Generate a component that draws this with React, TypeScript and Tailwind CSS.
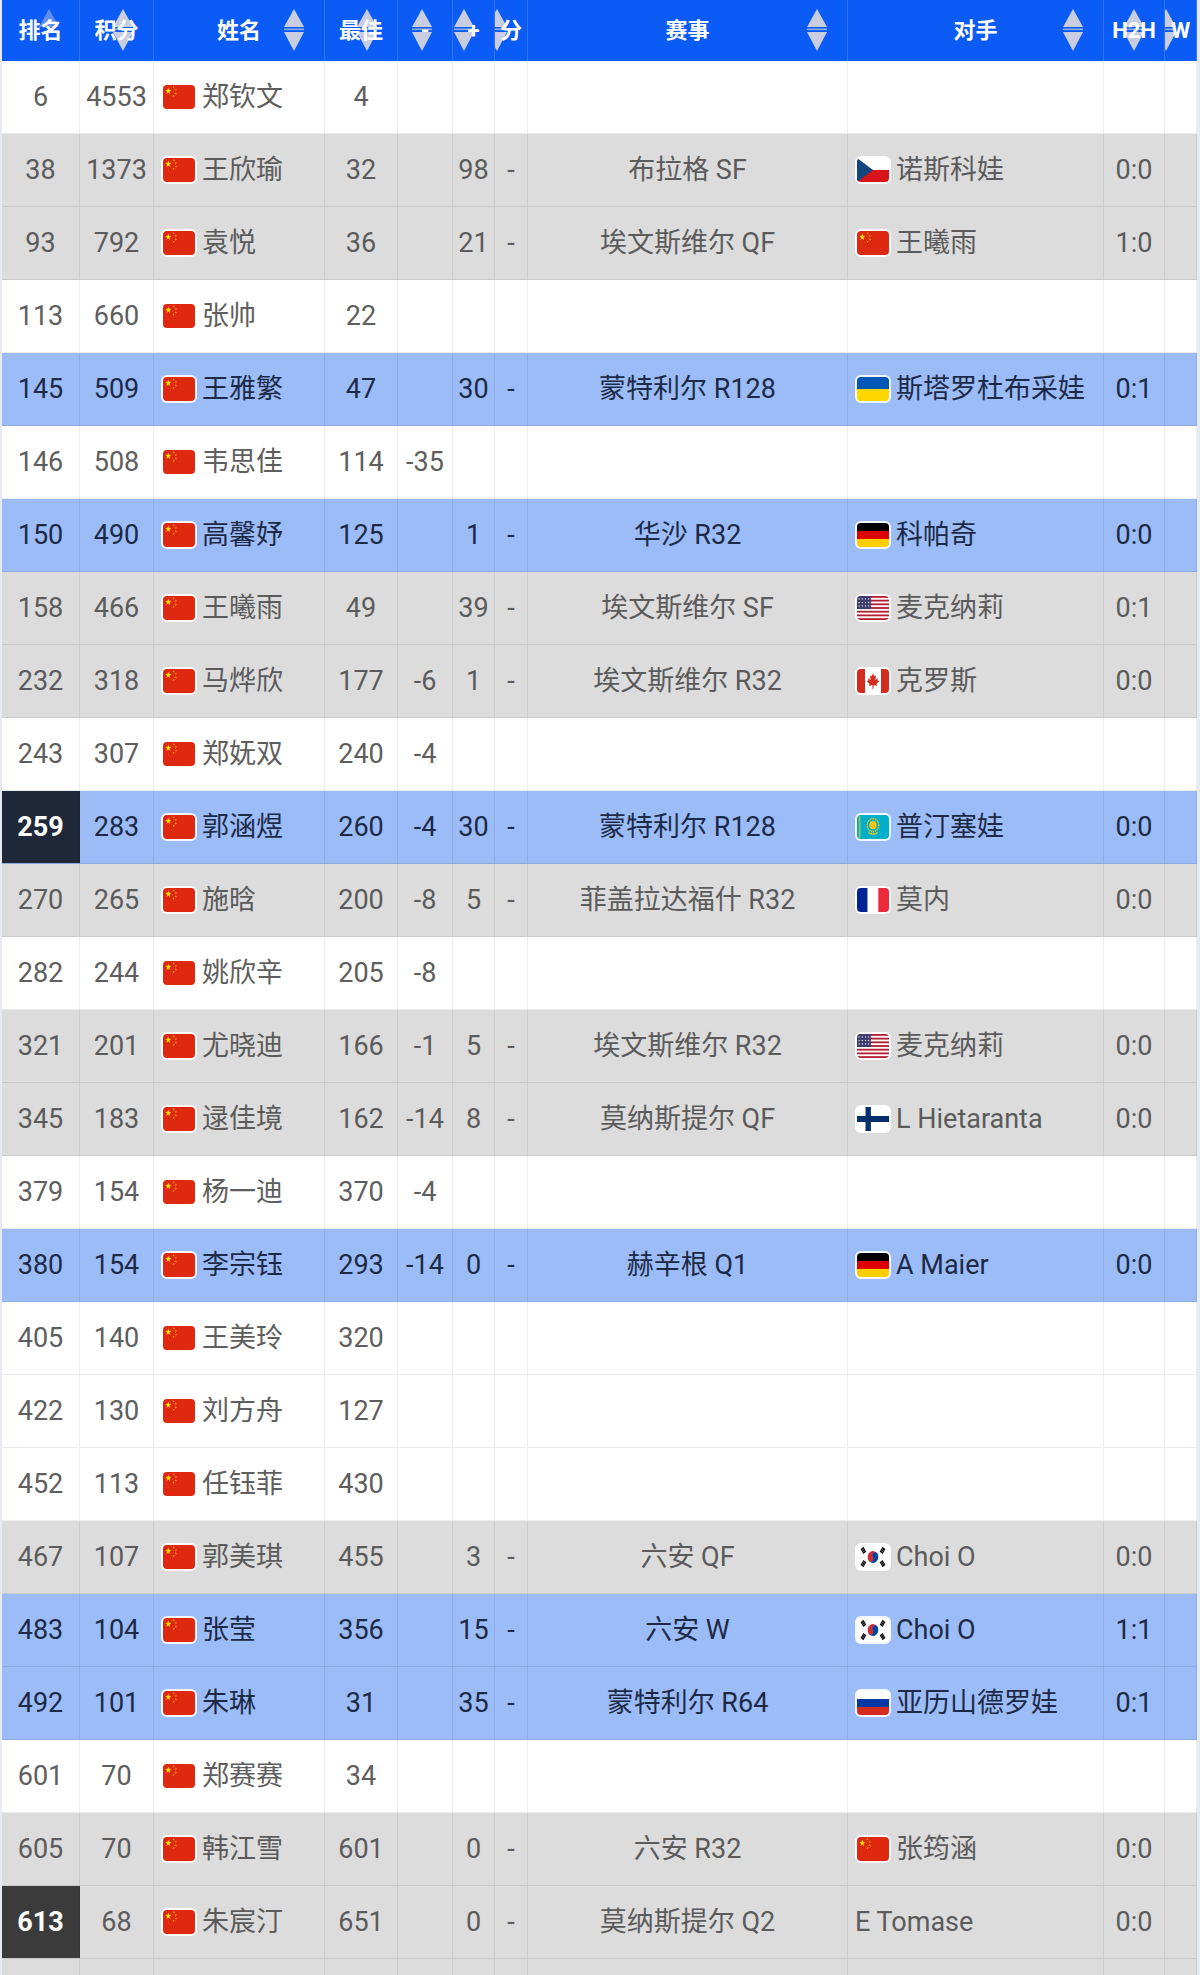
import React from 'react'

type FlagCode = 'cn' | 'cz' | 'ua' | 'de' | 'us' | 'ca' | 'kz' | 'fr' | 'fi' | 'kr' | 'ru'
type Tone = 'white' | 'gray' | 'blue'

interface Player {
  rank: string
  points: string
  name: string
  best: string
  drop?: string
  gain?: string
  event?: string
  opponent?: string
  oppFlag?: FlagCode
  h2h?: string
  tone: Tone
  mark?: 'navy' | 'dark'
}

const players: Player[] = [
  { rank: '6', points: '4553', name: '郑钦文', best: '4', tone: 'white' },
  { rank: '38', points: '1373', name: '王欣瑜', best: '32', gain: '98', event: '布拉格 SF', opponent: '诺斯科娃', oppFlag: 'cz', h2h: '0:0', tone: 'gray' },
  { rank: '93', points: '792', name: '袁悦', best: '36', gain: '21', event: '埃文斯维尔 QF', opponent: '王曦雨', oppFlag: 'cn', h2h: '1:0', tone: 'gray' },
  { rank: '113', points: '660', name: '张帅', best: '22', tone: 'white' },
  { rank: '145', points: '509', name: '王雅繁', best: '47', gain: '30', event: '蒙特利尔 R128', opponent: '斯塔罗杜布采娃', oppFlag: 'ua', h2h: '0:1', tone: 'blue' },
  { rank: '146', points: '508', name: '韦思佳', best: '114', drop: '-35', tone: 'white' },
  { rank: '150', points: '490', name: '高馨妤', best: '125', gain: '1', event: '华沙 R32', opponent: '科帕奇', oppFlag: 'de', h2h: '0:0', tone: 'blue' },
  { rank: '158', points: '466', name: '王曦雨', best: '49', gain: '39', event: '埃文斯维尔 SF', opponent: '麦克纳莉', oppFlag: 'us', h2h: '0:1', tone: 'gray' },
  { rank: '232', points: '318', name: '马烨欣', best: '177', drop: '-6', gain: '1', event: '埃文斯维尔 R32', opponent: '克罗斯', oppFlag: 'ca', h2h: '0:0', tone: 'gray' },
  { rank: '243', points: '307', name: '郑妩双', best: '240', drop: '-4', tone: 'white' },
  { rank: '259', points: '283', name: '郭涵煜', best: '260', drop: '-4', gain: '30', event: '蒙特利尔 R128', opponent: '普汀塞娃', oppFlag: 'kz', h2h: '0:0', tone: 'blue', mark: 'navy' },
  { rank: '270', points: '265', name: '施晗', best: '200', drop: '-8', gain: '5', event: '菲盖拉达福什 R32', opponent: '莫内', oppFlag: 'fr', h2h: '0:0', tone: 'gray' },
  { rank: '282', points: '244', name: '姚欣辛', best: '205', drop: '-8', tone: 'white' },
  { rank: '321', points: '201', name: '尤晓迪', best: '166', drop: '-1', gain: '5', event: '埃文斯维尔 R32', opponent: '麦克纳莉', oppFlag: 'us', h2h: '0:0', tone: 'gray' },
  { rank: '345', points: '183', name: '逯佳境', best: '162', drop: '-14', gain: '8', event: '莫纳斯提尔 QF', opponent: 'L Hietaranta', oppFlag: 'fi', h2h: '0:0', tone: 'gray' },
  { rank: '379', points: '154', name: '杨一迪', best: '370', drop: '-4', tone: 'white' },
  { rank: '380', points: '154', name: '李宗钰', best: '293', drop: '-14', gain: '0', event: '赫辛根 Q1', opponent: 'A Maier', oppFlag: 'de', h2h: '0:0', tone: 'blue' },
  { rank: '405', points: '140', name: '王美玲', best: '320', tone: 'white' },
  { rank: '422', points: '130', name: '刘方舟', best: '127', tone: 'white' },
  { rank: '452', points: '113', name: '任钰菲', best: '430', tone: 'white' },
  { rank: '467', points: '107', name: '郭美琪', best: '455', gain: '3', event: '六安 QF', opponent: 'Choi O', oppFlag: 'kr', h2h: '0:0', tone: 'gray' },
  { rank: '483', points: '104', name: '张莹', best: '356', gain: '15', event: '六安 W', opponent: 'Choi O', oppFlag: 'kr', h2h: '1:1', tone: 'blue' },
  { rank: '492', points: '101', name: '朱琳', best: '31', gain: '35', event: '蒙特利尔 R64', opponent: '亚历山德罗娃', oppFlag: 'ru', h2h: '0:1', tone: 'blue' },
  { rank: '601', points: '70', name: '郑赛赛', best: '34', tone: 'white' },
  { rank: '605', points: '70', name: '韩江雪', best: '601', gain: '0', event: '六安 R32', opponent: '张筠涵', oppFlag: 'cn', h2h: '0:0', tone: 'gray' },
  { rank: '613', points: '68', name: '朱宸汀', best: '651', gain: '0', event: '莫纳斯提尔 Q2', opponent: 'E Tomase', h2h: '0:0', tone: 'gray', mark: 'dark' },
]

const headers = ['排名', '积分', '姓名', '最佳', '-', '+', '分', '赛事', '对手', 'H2H', 'W']

const cols = 'grid grid-cols-[78px_74px_171px_73px_55px_42px_33px_320px_256px_61px_32px]'

function star(cx: number, cy: number, r: number, rot = 0) {
  const pts: string[] = []
  for (let i = 0; i < 10; i++) {
    const rad = i % 2 === 0 ? r : r * 0.4
    const a = (Math.PI / 5) * i - Math.PI / 2 + rot
    pts.push(`${(cx + rad * Math.cos(a)).toFixed(2)},${(cy + rad * Math.sin(a)).toFixed(2)}`)
  }
  return pts.join(' ')
}

function FlagArt({ code }: { code: FlagCode }) {
  switch (code) {
    case 'cn':
      return (
        <>
          <rect width="30" height="20" fill="#de2910" />
          <polygon points={star(5, 5, 3)} fill="#ffde00" />
          <polygon points={star(10, 2, 1, 0.4)} fill="#ffde00" />
          <polygon points={star(12, 4, 1, 0.2)} fill="#ffde00" />
          <polygon points={star(12, 7, 1)} fill="#ffde00" />
          <polygon points={star(10, 9, 1, 0.3)} fill="#ffde00" />
        </>
      )
    case 'cz':
      return (
        <>
          <rect width="30" height="10" fill="#ffffff" />
          <rect y="10" width="30" height="10" fill="#d7141a" />
          <polygon points="0,0 15,10 0,20" fill="#11457e" />
        </>
      )
    case 'ua':
      return (
        <>
          <rect width="30" height="10" fill="#0057b7" />
          <rect y="10" width="30" height="10" fill="#ffd700" />
        </>
      )
    case 'de':
      return (
        <>
          <rect width="30" height="7" fill="#000000" />
          <rect y="6.7" width="30" height="6.7" fill="#dd0000" />
          <rect y="13.3" width="30" height="6.7" fill="#ffce00" />
        </>
      )
    case 'us':
      return (
        <>
          <rect width="30" height="20" fill="#ffffff" />
          {[0, 2, 4, 6, 8, 10, 12].map((i) => (
            <rect key={i} y={(i * 20) / 13} width="30" height={20 / 13} fill="#b22234" />
          ))}
          <rect width="13" height="10.8" fill="#3c3b6e" />
          {[2, 5, 8, 11].map((x) =>
            [2, 5, 8].map((y) => <circle key={`${x}-${y}`} cx={x} cy={y + 0.4} r="0.6" fill="#ffffff" />)
          )}
        </>
      )
    case 'ca':
      return (
        <>
          <rect width="30" height="20" fill="#ffffff" />
          <rect width="7.5" height="20" fill="#d52b1e" />
          <rect x="22.5" width="7.5" height="20" fill="#d52b1e" />
          <polygon
            points="15,3.5 16.2,6 17.8,5.4 17.2,9.2 19.6,7.6 19.2,9.6 21,10 18.3,12.4 18.8,14 15.5,13.5 15.5,16.5 14.5,16.5 14.5,13.5 11.2,14 11.7,12.4 9,10 10.8,9.6 10.4,7.6 12.8,9.2 12.2,5.4 13.8,6"
            fill="#d52b1e"
          />
        </>
      )
    case 'kz':
      return (
        <>
          <rect width="30" height="20" fill="#00afca" />
          <circle cx="15" cy="8.5" r="5.4" fill="none" stroke="#fec50c" strokeWidth="1.4" strokeDasharray="1 0.8" />
          <circle cx="15" cy="8.5" r="3.4" fill="#fec50c" />
          <path d="M10 14 Q15 17 20 14 L19 15.5 Q15 17.5 11 15.5 Z" fill="#fec50c" />
          <rect x="2" y="1" width="1.2" height="18" fill="#fec50c" opacity="0.8" />
        </>
      )
    case 'fr':
      return (
        <>
          <rect width="10" height="20" fill="#002395" />
          <rect x="10" width="10" height="20" fill="#ffffff" />
          <rect x="20" width="10" height="20" fill="#ed2939" />
        </>
      )
    case 'fi':
      return (
        <>
          <rect width="30" height="20" fill="#ffffff" />
          <rect y="7.5" width="30" height="5" fill="#002f6c" />
          <rect x="8" width="5" height="20" fill="#002f6c" />
        </>
      )
    case 'kr':
      return (
        <>
          <rect width="30" height="20" fill="#ffffff" />
          <g transform="rotate(-33 15 10)">
            <path d="M10 10 A5 5 0 0 1 20 10 Z" fill="#cd2e3a" />
            <path d="M10 10 A5 5 0 0 0 20 10 Z" fill="#0047a0" />
            <circle cx="12.5" cy="10" r="2.5" fill="#cd2e3a" />
            <circle cx="17.5" cy="10" r="2.5" fill="#0047a0" />
          </g>
          {[
            [6, 4.5, -33],
            [24, 4.5, 33],
            [6, 15.5, 33],
            [24, 15.5, -33],
          ].map(([x, y, r]) => (
            <g key={`${x}-${y}`} transform={`translate(${x} ${y}) rotate(${r})`}>
              <rect x="-1.6" y="-2.5" width="1" height="5" fill="#000000" />
              <rect x="-0.5" y="-2.5" width="1" height="5" fill="#000000" />
              <rect x="0.6" y="-2.5" width="1" height="5" fill="#000000" />
            </g>
          ))}
        </>
      )
    case 'ru':
      return (
        <>
          <rect width="30" height="7" fill="#ffffff" />
          <rect y="6.7" width="30" height="6.7" fill="#0039a6" />
          <rect y="13.3" width="30" height="6.7" fill="#d52b1e" />
        </>
      )
  }
}

function Flag({ code }: { code: FlagCode }) {
  return (
    <span className="flex h-[28px] w-[36px] shrink-0 items-center justify-center rounded-[6px] bg-white/90 p-[2px]">
      <svg viewBox="0 0 30 20" preserveAspectRatio="none" className="h-full w-full rounded-[4px]">
        <FlagArt code={code} />
      </svg>
    </span>
  )
}

function SortArrows({ upOnly }: { upOnly?: boolean }) {
  return (
    <svg viewBox="0 0 22 44" className="absolute right-[19px] top-[8px] h-[44px] w-[22px] blur-[0.6px]">
      <polygon points="11,1 21,19 1,19" fill="#c9cde0" opacity={upOnly ? 0.45 : 1} />
      {!upOnly && (
        <>
          <rect x="1" y="20.5" width="20" height="1.6" fill="#c9cde0" opacity="0.7" />
          <polygon points="1,24 21,24 11,43" fill="#c9cde0" />
        </>
      )}
    </svg>
  )
}

const toneBg: Record<Tone, string> = {
  white: 'bg-white text-[#5e5e5e]',
  gray: 'bg-[#dcdcdc] text-[#5b5b5b]',
  blue: 'bg-[#9bbcf7] text-[#1c2a48]',
}

function Cell({ children, className = '' }: { children?: React.ReactNode; className?: string }) {
  return (
    <div className={`flex items-center justify-center border-r border-black/[0.07] ${className}`}>{children}</div>
  )
}

function PlayerRow({ p }: { p: Player }) {
  const markClass =
    p.mark === 'navy' ? 'bg-[#1f2839] font-bold text-white' : p.mark === 'dark' ? 'bg-[#3b3b3b] font-bold text-white' : ''
  return (
    <div className={`${cols} h-[73px] border-b border-black/[0.08] ${toneBg[p.tone]}`}>
      <Cell className={markClass}>{p.rank}</Cell>
      <Cell>{p.points}</Cell>
      <Cell className="justify-start gap-[5px] pl-[7px]">
        <Flag code="cn" />
        <span>{p.name}</span>
      </Cell>
      <Cell>{p.best}</Cell>
      <Cell>{p.drop}</Cell>
      <Cell>{p.gain}</Cell>
      <Cell>{p.event ? '-' : ''}</Cell>
      <Cell>{p.event}</Cell>
      <Cell className="justify-start gap-[5px] pl-[7px]">
        {p.oppFlag && <Flag code={p.oppFlag} />}
        {p.opponent && <span className="whitespace-nowrap">{p.opponent}</span>}
      </Cell>
      <Cell>{p.h2h}</Cell>
      <Cell />
    </div>
  )
}

export default function App() {
  return (
    <div className="h-[1975px] w-[1200px] overflow-hidden bg-[#e6ebf3] pl-[2px] pr-[3px] font-['Roboto','Noto_Sans_CJK_SC',sans-serif] text-[27px]">
      <div className={`${cols} h-[61px] bg-[#0b5cf6] text-[22px] font-bold text-white`}>
        {headers.map((h, i) => (
          <div key={h + i} className="relative flex items-center justify-center overflow-hidden border-r border-white/15">
            <SortArrows upOnly={i === 0} />
            <span className="relative z-10 whitespace-nowrap">{h}</span>
          </div>
        ))}
      </div>
      {players.map((p) => (
        <PlayerRow key={p.rank} p={p} />
      ))}
      <div className={`${cols} h-[73px] bg-[#dcdcdc]`}>
        {headers.map((h, i) => (
          <Cell key={'tail' + i} />
        ))}
      </div>
    </div>
  )
}
